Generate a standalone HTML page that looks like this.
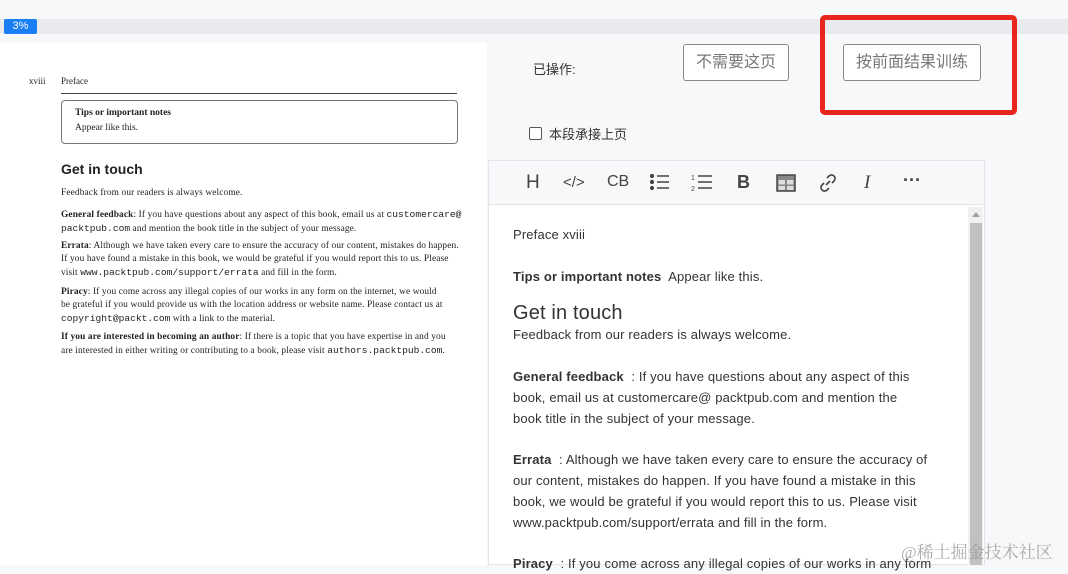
<!DOCTYPE html>
<html><head><meta charset="utf-8"><style>
*{margin:0;padding:0;box-sizing:border-box}
body{width:1068px;height:565px;overflow:hidden;background:#f7f8fa;font-family:"Liberation Sans","Noto Sans CJK SC",sans-serif;position:relative}
.abs{position:absolute}
.bar{left:0;top:19px;width:1068px;height:15px;background:#e8eaed}
.pct{left:4px;top:19px;width:33px;height:15px;background:#1a7ef5;color:#fff;font-size:11px;line-height:15px;text-align:center;border-radius:2px}
.page{left:0;top:43px;width:487px;height:522px;background:#fff}
.serif{font-family:"Liberation Serif",serif;color:#222}
.p{position:absolute;left:61px;width:420px;font-size:9.4px;line-height:13px;font-family:"Liberation Serif",serif;color:#222;white-space:nowrap;letter-spacing:0.12px}
.mono{font-family:"Liberation Mono",monospace;font-size:9.6px;letter-spacing:0}
.btn{border:1px solid #888;border-radius:3px;color:#777;font-size:16px;text-align:center;background:#fff}
.ed{left:488px;top:160px;width:497px;height:405px;border:1px solid #e2e4e8;background:#fff}
.tb{left:489px;top:161px;width:495px;height:44px;background:#f7f8fa;border-bottom:1px solid #e2e4e8}
.ic{position:absolute;top:172px;font-size:18px;color:#444}
.et{position:absolute;left:513px;width:450px;font-size:13px;line-height:21px;color:#333;white-space:nowrap;letter-spacing:0.15px}
</style></head><body>
<div class="abs bar"></div>
<div class="abs pct">3%</div>
<div class="abs page"></div>
<div class="abs serif" style="left:29px;top:76px;font-size:9px">xviii</div>
<div class="abs serif" style="left:61px;top:76px;font-size:9px">Preface</div>
<div class="abs" style="left:61px;top:93px;width:396px;height:1px;background:#444"></div>
<div class="abs" style="left:61px;top:100px;width:397px;height:44px;border:1px solid #777;border-radius:4px"></div>
<div class="abs serif" style="left:75px;top:108px;font-size:9.5px;font-weight:bold">Tips or important notes</div>
<div class="abs serif" style="left:75px;top:123px;font-size:9.5px">Appear like this.</div>
<div class="abs" style="left:61px;top:161px;font-size:14px;font-weight:bold;color:#222">Get in touch</div>
<div class="p" style="top:187px">Feedback from our readers is always welcome.</div>
<div class="p" style="top:208px"><b>General feedback</b>: If you have questions about any aspect of this book, email us at <span class="mono">customercare@</span><br><span class="mono">packtpub.com</span> and mention the book title in the subject of your message.</div>
<div class="p" style="top:240px"><b>Errata</b>: Although we have taken every care to ensure the accuracy of our content, mistakes do happen.<br>If you have found a mistake in this book, we would be grateful if you would report this to us. Please<br>visit <span class="mono">www.packtpub.com/support/errata</span> and fill in the form.</div>
<div class="p" style="top:286px"><b>Piracy</b>: If you come across any illegal copies of our works in any form on the internet, we would<br>be grateful if you would provide us with the location address or website name. Please contact us at<br><span class="mono">copyright@packt.com</span> with a link to the material.</div>
<div class="p" style="top:331px"><b>If you are interested in becoming an author</b>: If there is a topic that you have expertise in and you<br>are interested in either writing or contributing to a book, please visit <span class="mono">authors.packtpub.com</span>.</div>

<div class="abs" style="left:533px;top:59px;font-size:13px;color:#333">已操作:</div>
<div class="abs btn" style="left:683px;top:44px;width:106px;height:37px;line-height:35px">不需要这页</div>
<div class="abs btn" style="left:843px;top:44px;width:138px;height:37px;line-height:35px">按前面结果训练</div>
<div class="abs" style="left:820px;top:15px;width:197px;height:100px;border:5px solid #e8261e;border-radius:5px"></div>
<div class="abs" style="left:529px;top:127px;width:13px;height:13px;border:1px solid #555;border-radius:2px;background:#fff"></div>
<div class="abs" style="left:549px;top:124px;font-size:13px;color:#333">本段承接上页</div>

<div class="abs ed"></div>
<div class="abs tb"></div>
<div class="ic" style="left:526px;font-size:19px">H</div>
<div class="ic" style="left:563px;font-size:15px;top:174px">&lt;/&gt;</div>
<div class="ic" style="left:607px;font-size:16px;top:173px">CB</div>
<svg class="abs" style="left:650px;top:172px" width="70" height="22" viewBox="0 0 70 22" fill="none" stroke="#444" stroke-width="1.6">
<circle cx="2" cy="4" r="1.3" fill="#444"/><circle cx="2" cy="10" r="1.3" fill="#444"/><circle cx="2" cy="16" r="1.3" fill="#444"/>
<path d="M7 4h12M7 10h12M7 16h12"/>
<text x="41" y="8" font-size="7" fill="#444" stroke="none" font-family="Liberation Sans">1</text>
<text x="41" y="19" font-size="7" fill="#444" stroke="none" font-family="Liberation Sans">2</text>
<path d="M48 4h14M48 10h14M48 16h14"/>
</svg>
<div class="ic" style="left:737px;font-weight:bold;font-size:18px">B</div>
<svg class="abs" style="left:776px;top:174px" width="20" height="18" viewBox="0 0 20 18"><rect x="1" y="1" width="18" height="16" fill="#888" stroke="#444" stroke-width="1.5"/><rect x="2.5" y="6" width="6.5" height="4.5" fill="#ddd"/><rect x="11" y="6" width="6.5" height="4.5" fill="#ddd"/><rect x="2.5" y="12" width="6.5" height="4" fill="#ddd"/><rect x="11" y="12" width="6.5" height="4" fill="#ddd"/></svg>
<svg class="abs" style="left:818px;top:173px" width="20" height="20" viewBox="0 0 20 20" fill="none" stroke="#444" stroke-width="1.6"><path d="M8 12l4-4M9 5l2-2a3.5 3.5 0 015 5l-2 2M11 15l-2 2a3.5 3.5 0 01-5-5l2-2"/></svg>
<div class="ic" style="left:864px;font-family:'Liberation Serif',serif;font-style:italic;font-size:19px">I</div>
<div class="ic" style="left:903px;font-weight:bold;top:170px">···</div>

<div class="abs" style="left:968px;top:207px;width:15px;height:358px;background:#f1f1f1"></div>
<div class="abs" style="left:970px;top:223px;width:12px;height:342px;background:#c1c1c1"></div>
<div class="abs" style="left:972px;top:212px;width:0;height:0;border-left:4px solid transparent;border-right:4px solid transparent;border-bottom:5px solid #a0a0a0"></div>

<div class="et" style="top:224px">Preface xviii</div>
<div class="et" style="top:266px"><b style="font-weight:600">Tips or important notes</b>&nbsp; Appear like this.</div>
<div class="et" style="top:301px;font-size:20px;line-height:24px">Get in touch</div>
<div class="et" style="top:324px">Feedback from our readers is always welcome.</div>
<div class="et" style="top:366px"><b style="font-weight:600">General feedback</b> &nbsp;: If you have questions about any aspect of this<br>book, email us at customercare@ packtpub.com and mention the<br>book title in the subject of your message.</div>
<div class="et" style="top:449px"><b style="font-weight:600">Errata</b> &nbsp;: Although we have taken every care to ensure the accuracy of<br>our content, mistakes do happen. If you have found a mistake in this<br>book, we would be grateful if you would report this to us. Please visit<br>www.packtpub.com/support/errata and fill in the form.</div>
<div class="et" style="top:553px;overflow:hidden;width:453px"><b style="font-weight:600">Piracy</b> &nbsp;: If you come across any illegal copies of our works in any form</div>
<div class="abs" style="left:901px;top:538px;font-size:17px;color:rgba(150,150,150,.8);font-family:'Liberation Serif','Noto Serif CJK SC',serif">@稀土掘金技术社区</div>
</body></html>
